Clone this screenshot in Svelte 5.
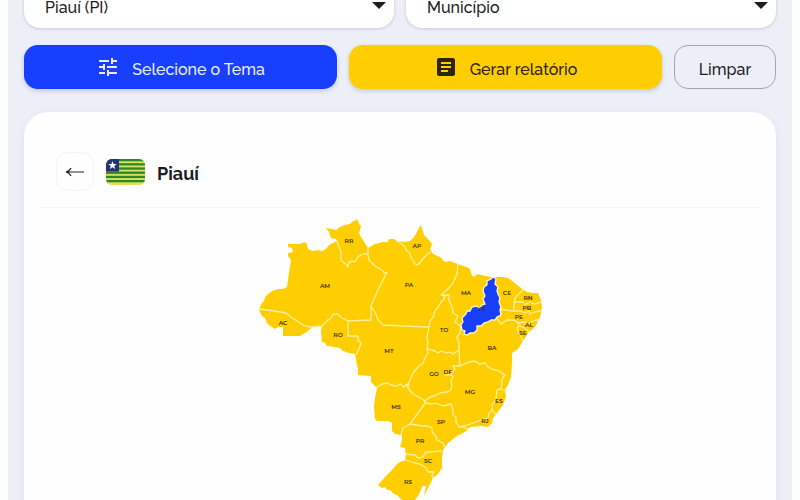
<script>
  let uf = "PI";
  let city = "";

  // outer contour of the country
  const outline =
    "M260 307L262 303 264 301 265 297 267 295 272 291 278 289 283 289 287 287 289 273 290 266 291 260 288 256 288 253 293 252 292 248 288 247 288 244 300 244 305 242 307 244 308 249 313 251 318 250 322 251 326 249 329 245 333 243 337 241 336 239 331 238 329 232 326 228 332 229 336 230 340 227 345 225 350 224 352 222 356 220 357 219 359 224 361 226 359 233 361 237 365 243 368 248 375 244 383 242 388 242 389 239 394 239 397 241 405 242 410 241 414 237 417 232 419 228 421 225 423 232 424 235 428 239 432 244 430 249 433 254 440 257 443 260 445 262 450 261 458 264 463 266 467 267 470 269 471 273 473 277 478 274 485 276 492 277 495 277 502 277 508 278 515 283 522 289 527 292 533 293 538 293 541 300 542 308 540 317 535 327 528 333 523 341 518 349 512 353 512 363 511 377 508 385 505 390 506 397 503 405 497 413 493 418 492 423 488 427 482 426 470 427 465 432 457 436 448 443 443 450 442 458 442 468 438 474 433 478 430 484 428 488 424 496 426 486 422 486 421 490 418 496 415 500 409 507 405 511 403 507 405 502 402 500 397 495 394 494 390 490 387 490 385 487 382 488 378 485 385 477 392 470 398 463 405 460 406 455 405 448 400 447 402 440 402 435 395 434 392 431 392 423 388 421 377 421 375 419 374 407 375 398 377 388 374 385 371 382 371 376 358 375 358 369 357 365 355 354 349 353 343 351 340 348 335 347 327 346 325 343 322 342 321 330 322 327 313 327 305 333 300 336 283 336 283 327 278 327 275 329 270 326 267 323 265 318 262 316 259 310Z";

  const piaui =
    "M491 279L493 277 496 279 495 284 498 287 497 291 498 294 500 298 499 302 501 307 500 310 501 315 497 317 495 320 491 320 488 322 484 323 481 326 477 326 477 330 474 333 470 333 467 335 464 334 465 331 462 330 461 325 463 322 462 318 466 314 467 311 470 311 472 307 476 306 480 308 482 305 485 304 483 299 485 296 483 291 484 287 487 285 487 281Z";

  const borders = [
    "M259 309L275 311 286 313 291 317 297 321 303 325 310 327 322 326 325 323 328 320 331 318 333 314 338 314 342 318 346 320 348 321 371 320 371 306",
    "M348 321L348 336 358 336 358 340 361 343 359 349 356 355",
    "M337 241L339 247 341 252 341 260 344 263 346 264 348 267 349 262 353 261 355 262 357 258 359 256 363 254 368 254",
    "M368 248L368 254 369 260 375 266 382 270 384 273 387 272 378 290 371 306 375 312 378 320 383 325 403 326 429 327",
    "M397 241L402 244 405 247 407 251 409 252 412 259 415 264 418 265 422 260 427 254 431 252",
    "M429 327L427 338 428 343 427 349 428 353 425 358 423 363 418 367 413 373 409 382 408 388",
    "M429 327L430 321 433 317 435 311 439 306 441 302 444 299 445 296 441 295 447 290 453 283 457 274 458 264",
    "M441 295L449 295 449 301 452 306 453 313 458 316 455 322 459 325 461 328 460 333 457 337 459 343 459 350 460 367",
    "M427 348L431 350 435 351 438 353 441 351 447 353 450 352 453 354 459 350",
    "M376 388L382 384 387 383 391 385 397 386 400 384 404 387 407 384 408 388 413 394 419 397 425 401",
    "M460 366L453 366 455 369 451 373 453 377 451 381 452 385 451 390 447 392 440 393 434 396 430 397 425 401 424 405 418 413 410 424 403 428 401 435",
    "M445 375L451 375",
    "M425 403L432 404 435 403 443 406 451 404 453 409 453 415 456 417 456 422 459 427 468 425 473 423 478 421 488 418 489 413 492 410 492 405 495 401 496 398 497 390 501 389 507 391",
    "M460 366L466 363 473 361 477 362 479 364 485 363 488 367 492 369 499 371 505 375 502 379 502 383 501 389",
    "M459 427L464 427 468 430",
    "M492 410L494 413 498 414",
    "M410 424L423 426 428 426 432 428 432 432 435 435 437 440 443 443 445 448",
    "M405 454L415 455 418 458 423 457 425 453 429 452 442 451",
    "M405 460L415 463 420 464 425 467 428 472 434 472 432 476 433 479",
    "M523 290L520 293 515 298 514 302 523 302 525 305 529 302 534 304 541 302",
    "M515 299L514 306 514 311 520 311 525 313 529 311 530 314 535 312 542 310",
    "M500 309L506 310 514 311",
    "M497 319L501 324 507 320 514 320 518 323 524 322 528 324 533 321 540 319",
    "M518 323L519 326 525 328 529 332",
    "M519 326L517 328 519 333 523 341",
  ];

  const labels = [
    ["RR", 349, 243],
    ["AP", 417, 248],
    ["AM", 325, 288],
    ["PA", 409, 287],
    ["AC", 283, 325],
    ["RO", 338, 337],
    ["MT", 389, 353],
    ["TO", 444, 332],
    ["MA", 466, 295],
    ["PI", 482, 311],
    ["CE", 507, 295],
    ["RN", 528, 300],
    ["PB", 527, 310],
    ["PE", 519, 319],
    ["AL", 529, 327],
    ["SE", 523, 335],
    ["BA", 492, 350],
    ["GO", 434, 376],
    ["DF", 448, 374],
    ["MG", 470, 394],
    ["ES", 499, 403],
    ["MS", 396, 409],
    ["SP", 441, 424],
    ["RJ", 485, 423],
    ["PR", 420, 443],
    ["SC", 428, 463],
    ["RS", 408, 484],
  ];
</script>

<main>
  <div class="filters">
    <div class="field">
      <select aria-label="Estado" bind:value={uf}>
        <option value="PI">Piauí (PI)</option>
      </select>
      <svg class="caret" viewBox="0 0 14 7"><path d="M0 0h14L7 7z" /></svg>
    </div>
    <div class="field">
      <select aria-label="Município" bind:value={city}>
        <option value="">Município</option>
      </select>
      <svg class="caret" viewBox="0 0 14 7"><path d="M0 0h14L7 7z" /></svg>
    </div>
  </div>

  <div class="actions">
    <button type="button" class="theme">
      <svg class="icon" viewBox="0 0 24 24">
        <path
          d="M3 17v2h6v-2H3zM3 5v2h10V5H3zm10 16v-2h8v-2h-8v-2h-2v6h2zM7 9v2H3v2h4v2h2V9H7zm14 4v-2H11v2h10zm-6-4h2V7h4V5h-4V3h-2v6z"
        />
      </svg>
      <span>Selecione o Tema</span>
    </button>
    <button type="button" class="report">
      <svg class="icon" viewBox="0 0 24 24">
        <path
          d="M19 3H5c-1.1 0-2 .9-2 2v14c0 1.1.9 2 2 2h14c1.1 0 2-.9 2-2V5c0-1.1-.9-2-2-2zm-5 14H7v-2h7v2zm3-4H7v-2h10v2zm0-4H7V7h10v2z"
        />
      </svg>
      <span>Gerar relatório</span>
    </button>
    <button type="button" class="clear"><span>Limpar</span></button>
  </div>

  <section class="card">
    <header>
      <button type="button" class="back" aria-label="Voltar">
        <svg viewBox="0 0 20 12">
          <path d="M19 6H1.5M6 2C5 4 3.500 5.500 1 6c2.500.5 4 2 5 4" />
        </svg>
      </button>
      <svg class="flag" viewBox="0 0 39 26">
        <rect width="39" height="26" fill="#d5e265" />
        {#each [0, 4.2, 8.4, 12.6, 16.800, 21] as y}
          <rect {y} width="39" height="2.300" fill="#2c8a20" />
        {/each}
        <rect y="24" width="39" height="2" fill="#f4d95c" />
        <rect width="13" height="12.600" fill="#26337a" />
        <path
          fill="#fff"
          d="M6.500 2l1.100 2.900 3.100.1-2.400 1.900.8 3-2.600-1.700-2.600 1.700.8-3L2.300 5l3.100-.1z"
        />
      </svg>
      <h1>Piauí</h1>
    </header>

    <svg class="map" viewBox="250 208 300 312" role="img" aria-label="Mapa do Brasil">
      <path class="country" d={outline} />
      {#each borders as d}
        <path class="border" {d} />
      {/each}
      <path class="selected" d={piaui} />
      {#each labels as [name, x, y]}
        <text {x} {y}>{name}</text>
      {/each}
    </svg>
  </section>
</main>

<style>
  :global(body) {
    margin: 0;
    background: #fdfdfe;
  }

  main {
    box-sizing: border-box;
    height: 100vh;
    margin: 0 8px;
    padding: 0 16px;
    overflow: hidden;
    background: #eceff8;
    color: #1c1d22;
    font-family: "Raleway", "Lato", sans-serif;
    font-weight: 500;
  }

  /* the filter row is scrolled partly out of view */
  .filters {
    display: grid;
    grid-template-columns: 1fr 1fr;
    gap: 12px;
    margin-top: -16px;
  }

  .field {
    position: relative;
  }

  select {
    display: block;
    width: 100%;
    height: 44px;
    padding: 3px 40px 0 21px;
    border: 0;
    border-radius: 16px;
    appearance: none;
    background: #fff;
    box-shadow: 0 1px 3px rgba(30, 40, 80, 0.2);
    color: inherit;
    font: inherit;
    font-size: 16px;
  }

  .caret {
    position: absolute;
    top: 18px;
    right: 8px;
    width: 14px;
    height: 7px;
    fill: #1c1d22;
  }

  .actions {
    display: flex;
    gap: 12px;
    margin-top: 17px;
  }

  button {
    display: flex;
    align-items: center;
    justify-content: center;
    padding: 0;
    border: 0;
    color: inherit;
    font: inherit;
    font-size: 16px;
    cursor: pointer;
  }

  .actions button {
    height: 44px;
    border-radius: 14px;
  }

  .actions span {
    padding-top: 4px;
  }

  .theme,
  .report {
    flex: 1;
    gap: 12px;
    box-shadow: 0 2px 4px rgba(30, 40, 80, 0.18);
  }

  .actions .theme {
    background: #183eff;
    color: #e9edff;
  }

  .actions .report {
    background: #ffce00;
    color: #2b2408;
  }

  .actions .clear {
    width: 102px;
    border: 1px solid #a3a5ad;
    background: transparent;
  }

  .icon {
    width: 24px;
    height: 24px;
    fill: currentColor;
  }

  .card {
    margin-top: 23px;
    padding: 16px;
    border-radius: 24px;
    background: #fefefe;
    box-shadow: 0 2px 8px rgba(30, 40, 80, 0.06);
  }

  header {
    display: flex;
    align-items: center;
    gap: 12px;
    padding: 24px 16px 16px;
    border-bottom: 1px solid #f4f4f6;
  }

  .back {
    width: 38px;
    height: 39px;
    border: 1px solid #f3f3f5;
    border-radius: 12px;
    background: #fefefe;
  }

  .back svg {
    width: 20px;
    height: 12px;
    fill: none;
    stroke: #222;
    stroke-width: 1.2;
  }

  .flag {
    width: 39px;
    height: 26px;
    border-radius: 6px;
  }

  h1 {
    margin: 0;
    padding-top: 4px;
    font-size: 18px;
    font-weight: 700;
  }

  .map {
    display: block;
    width: 300px;
    max-width: 100%;
    margin: 0 auto;
  }

  .country {
    fill: #ffce00;
  }

  .border {
    fill: none;
    stroke: #fff0a0;
    stroke-width: 1.3;
    stroke-linejoin: round;
  }

  .selected {
    fill: #183eff;
    stroke: #fff6cc;
    stroke-width: 1.3;
  }

  text {
    fill: #3a2f05;
    font-family: "Montserrat", "Inter", sans-serif;
    font-size: 6px;
    font-weight: 600;
    text-anchor: middle;
  }
</style>
